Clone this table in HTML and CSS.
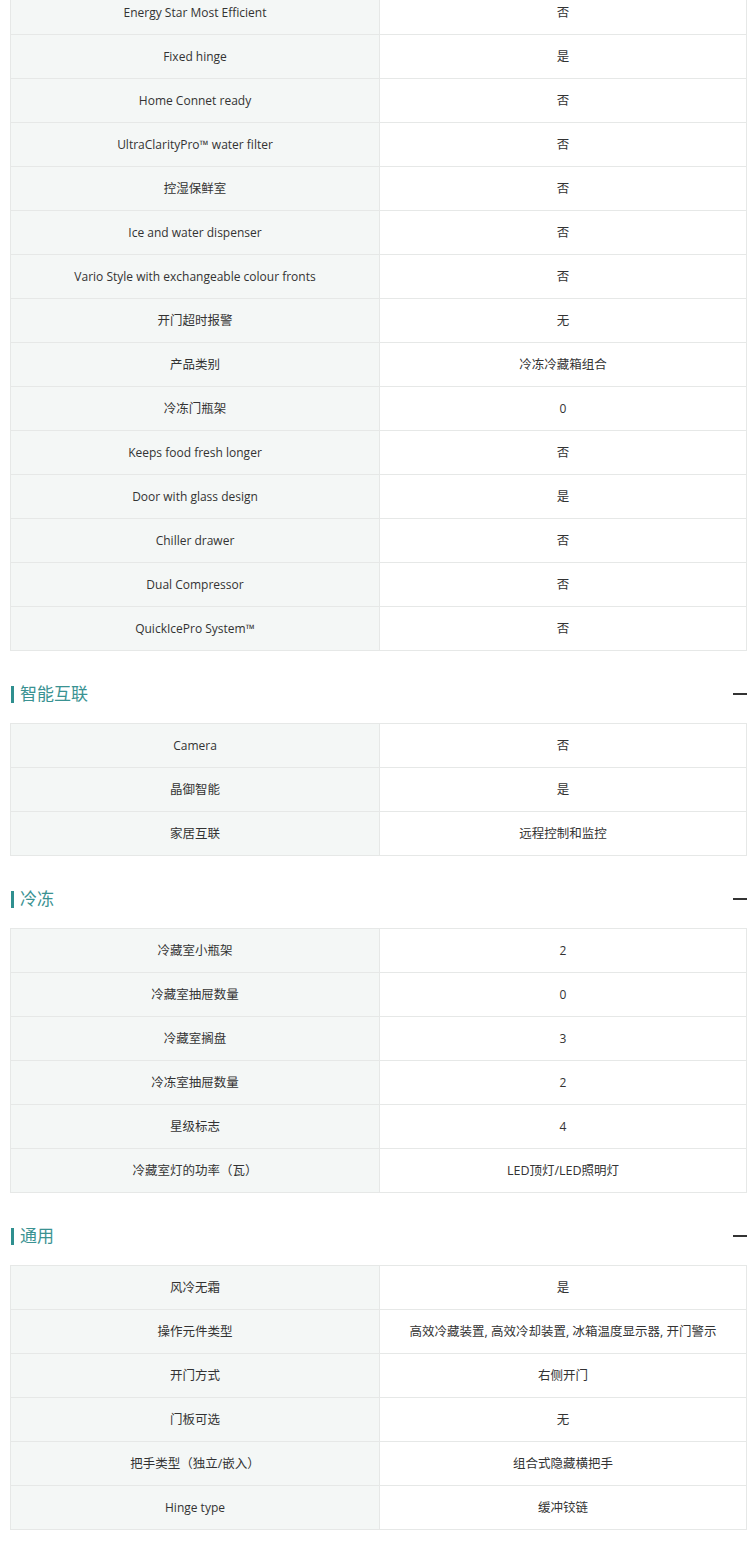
FILE: index.html
```html
<!DOCTYPE html>
<html lang="zh">
<head>
<meta charset="utf-8">
<link rel="stylesheet" href="styles.css">
</head>
<body>
<div class="page">
  <table class="spec first">
    <tr><td class="k en">Energy Star Most Efficient</td><td class="v">否</td></tr>
    <tr><td class="k en">Fixed hinge</td><td class="v">是</td></tr>
    <tr><td class="k en">Home Connet ready</td><td class="v">否</td></tr>
    <tr><td class="k en">UltraClarityPro™ water filter</td><td class="v">否</td></tr>
    <tr><td class="k">控湿保鲜室</td><td class="v">否</td></tr>
    <tr><td class="k en">Ice and water dispenser</td><td class="v">否</td></tr>
    <tr><td class="k en">Vario Style with exchangeable colour fronts</td><td class="v">否</td></tr>
    <tr><td class="k">开门超时报警</td><td class="v">无</td></tr>
    <tr><td class="k">产品类别</td><td class="v">冷冻冷藏箱组合</td></tr>
    <tr><td class="k">冷冻门瓶架</td><td class="v en">0</td></tr>
    <tr><td class="k en">Keeps food fresh longer</td><td class="v">否</td></tr>
    <tr><td class="k en">Door with glass design</td><td class="v">是</td></tr>
    <tr><td class="k en">Chiller drawer</td><td class="v">否</td></tr>
    <tr><td class="k en">Dual Compressor</td><td class="v">否</td></tr>
    <tr><td class="k en">QuickIcePro System™</td><td class="v">否</td></tr>
  </table>

  <div class="sec-head"><span class="sec-title">智能互联</span><span class="minus"></span></div>
  <table class="spec">
    <tr><td class="k en">Camera</td><td class="v">否</td></tr>
    <tr><td class="k">晶御智能</td><td class="v">是</td></tr>
    <tr><td class="k">家居互联</td><td class="v">远程控制和监控</td></tr>
  </table>

  <div class="sec-head"><span class="sec-title">冷冻</span><span class="minus"></span></div>
  <table class="spec">
    <tr><td class="k">冷藏室小瓶架</td><td class="v en">2</td></tr>
    <tr><td class="k">冷藏室抽屉数量</td><td class="v en">0</td></tr>
    <tr><td class="k">冷藏室搁盘</td><td class="v en">3</td></tr>
    <tr><td class="k">冷冻室抽屉数量</td><td class="v en">2</td></tr>
    <tr><td class="k">星级标志</td><td class="v en">4</td></tr>
    <tr><td class="k">冷藏室灯的功率（瓦）</td><td class="v">LED顶灯/LED照明灯</td></tr>
  </table>

  <div class="sec-head"><span class="sec-title">通用</span><span class="minus"></span></div>
  <table class="spec">
    <tr><td class="k">风冷无霜</td><td class="v">是</td></tr>
    <tr><td class="k">操作元件类型</td><td class="v">高效冷藏装置, 高效冷却装置, 冰箱温度显示器, 开门警示</td></tr>
    <tr><td class="k">开门方式</td><td class="v">右侧开门</td></tr>
    <tr><td class="k">门板可选</td><td class="v">无</td></tr>
    <tr><td class="k">把手类型（独立/嵌入）</td><td class="v">组合式隐藏横把手</td></tr>
    <tr><td class="k en">Hinge type</td><td class="v">缓冲铰链</td></tr>
  </table>
</div>
</body>
</html>
```

FILE: styles.css
```css
html, body {
  margin: 0;
  padding: 0;
  background: #ffffff;
}
body {
  font-family: "Open Sans", "Noto Sans CJK SC", sans-serif;
  color: #333333;
  overflow: hidden;
}
.page {
  padding: 0 3px 0 10px;
  margin-top: -10px;
}
.spec {
  width: 100%;
  border-collapse: collapse;
  table-layout: fixed;
}
.spec td {
  height: 43px;
  padding: 0 6px;
  border: 1px solid #e6e8e7;
  text-align: center;
  vertical-align: middle;
  font-size: 12.5px;
  line-height: 16px;
  color: #333333;
}
.spec td.en {
  font-size: 12px;
}
.spec td.k {
  width: 356px;
  background: #f4f7f6;
}
.spec td.v {
  background: #ffffff;
}
.sec-head {
  display: flex;
  align-items: center;
  justify-content: space-between;
  height: 30px;
  margin: 28px 0 14px;
}
.sec-title {
  display: flex;
  align-items: center;
  font-size: 17px;
  color: #3a9292;
  line-height: 30px;
}
.sec-title::before {
  content: "";
  display: block;
  width: 3px;
  height: 17px;
  background: #2f8f8f;
  margin: 0 6px 0 1px;
}
.minus {
  display: block;
  width: 14px;
  height: 2px;
  background: #333333;
}
```
